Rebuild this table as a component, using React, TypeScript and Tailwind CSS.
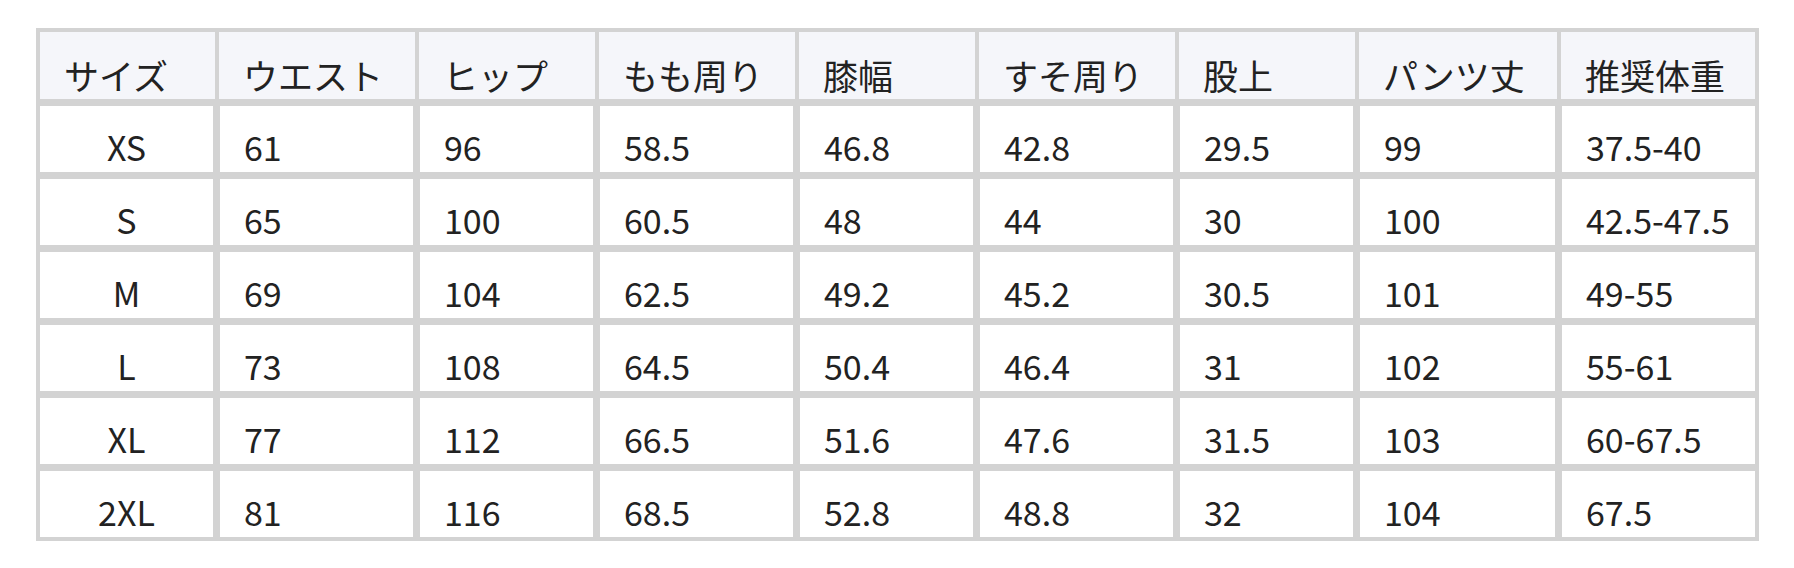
const HEAD = ["サイズ", "ウエスト", "ヒップ", "もも周り", "膝幅", "すそ周り", "股上", "パンツ丈", "推奨体重"];

const ROWS = [
  ["XS", "61", "96", "58.5", "46.8", "42.8", "29.5", "99", "37.5-40"],
  ["S", "65", "100", "60.5", "48", "44", "30", "100", "42.5-47.5"],
  ["M", "69", "104", "62.5", "49.2", "45.2", "30.5", "101", "49-55"],
  ["L", "73", "108", "64.5", "50.4", "46.4", "31", "102", "55-61"],
  ["XL", "77", "112", "66.5", "51.6", "47.6", "31.5", "103", "60-67.5"],
  ["2XL", "81", "116", "68.5", "52.8", "48.8", "32", "104", "67.5"],
];

// header cells sit on 4px rules, body cells on 7px rules
const HEAD_W = ["w-[175px]", "w-[196px]", "w-[176px]", "w-[196px]", "w-[176px]", "w-[196px]", "w-[176px]", "w-[198px]", "w-[194px]"];
const BODY_W = ["w-[173px]", "w-[193px]", "w-[173px]", "w-[193px]", "w-[173px]", "w-[193px]", "w-[173px]", "w-[195px]", "w-[193px]"];

export default function App() {
  return (
    <div
      className="min-h-[568px] w-[1794px] bg-white pl-[36px] pt-[28px] text-[#222]"
      style={{ fontFamily: '"Noto Sans CJK JP", "Noto Sans", sans-serif' }}
    >
      <div className="w-[1723px] bg-[#d3d3d3] p-[4px]">
        <div className="flex gap-[4px]">
          {HEAD.map((h, i) => (
            <div
              key={h}
              className={`${HEAD_W[i]} flex h-[67px] items-end overflow-hidden whitespace-nowrap bg-[#f5f6fa] pb-[7px] pl-[24px] text-[35px] leading-none`}
            >
              {h}
            </div>
          ))}
        </div>

        {ROWS.map((r) => (
          <div key={r[0]} className="mt-[7px] flex gap-[7px]">
            {r.map((v, i) => (
              <div
                key={i}
                className={`${BODY_W[i]} flex h-[66px] items-end overflow-hidden whitespace-nowrap bg-white pb-[8px] text-[34px] leading-none ${
                  i === 0 ? "justify-center" : "pl-[24px]"
                }`}
              >
                {v}
              </div>
            ))}
          </div>
        ))}
      </div>
    </div>
  );
}
